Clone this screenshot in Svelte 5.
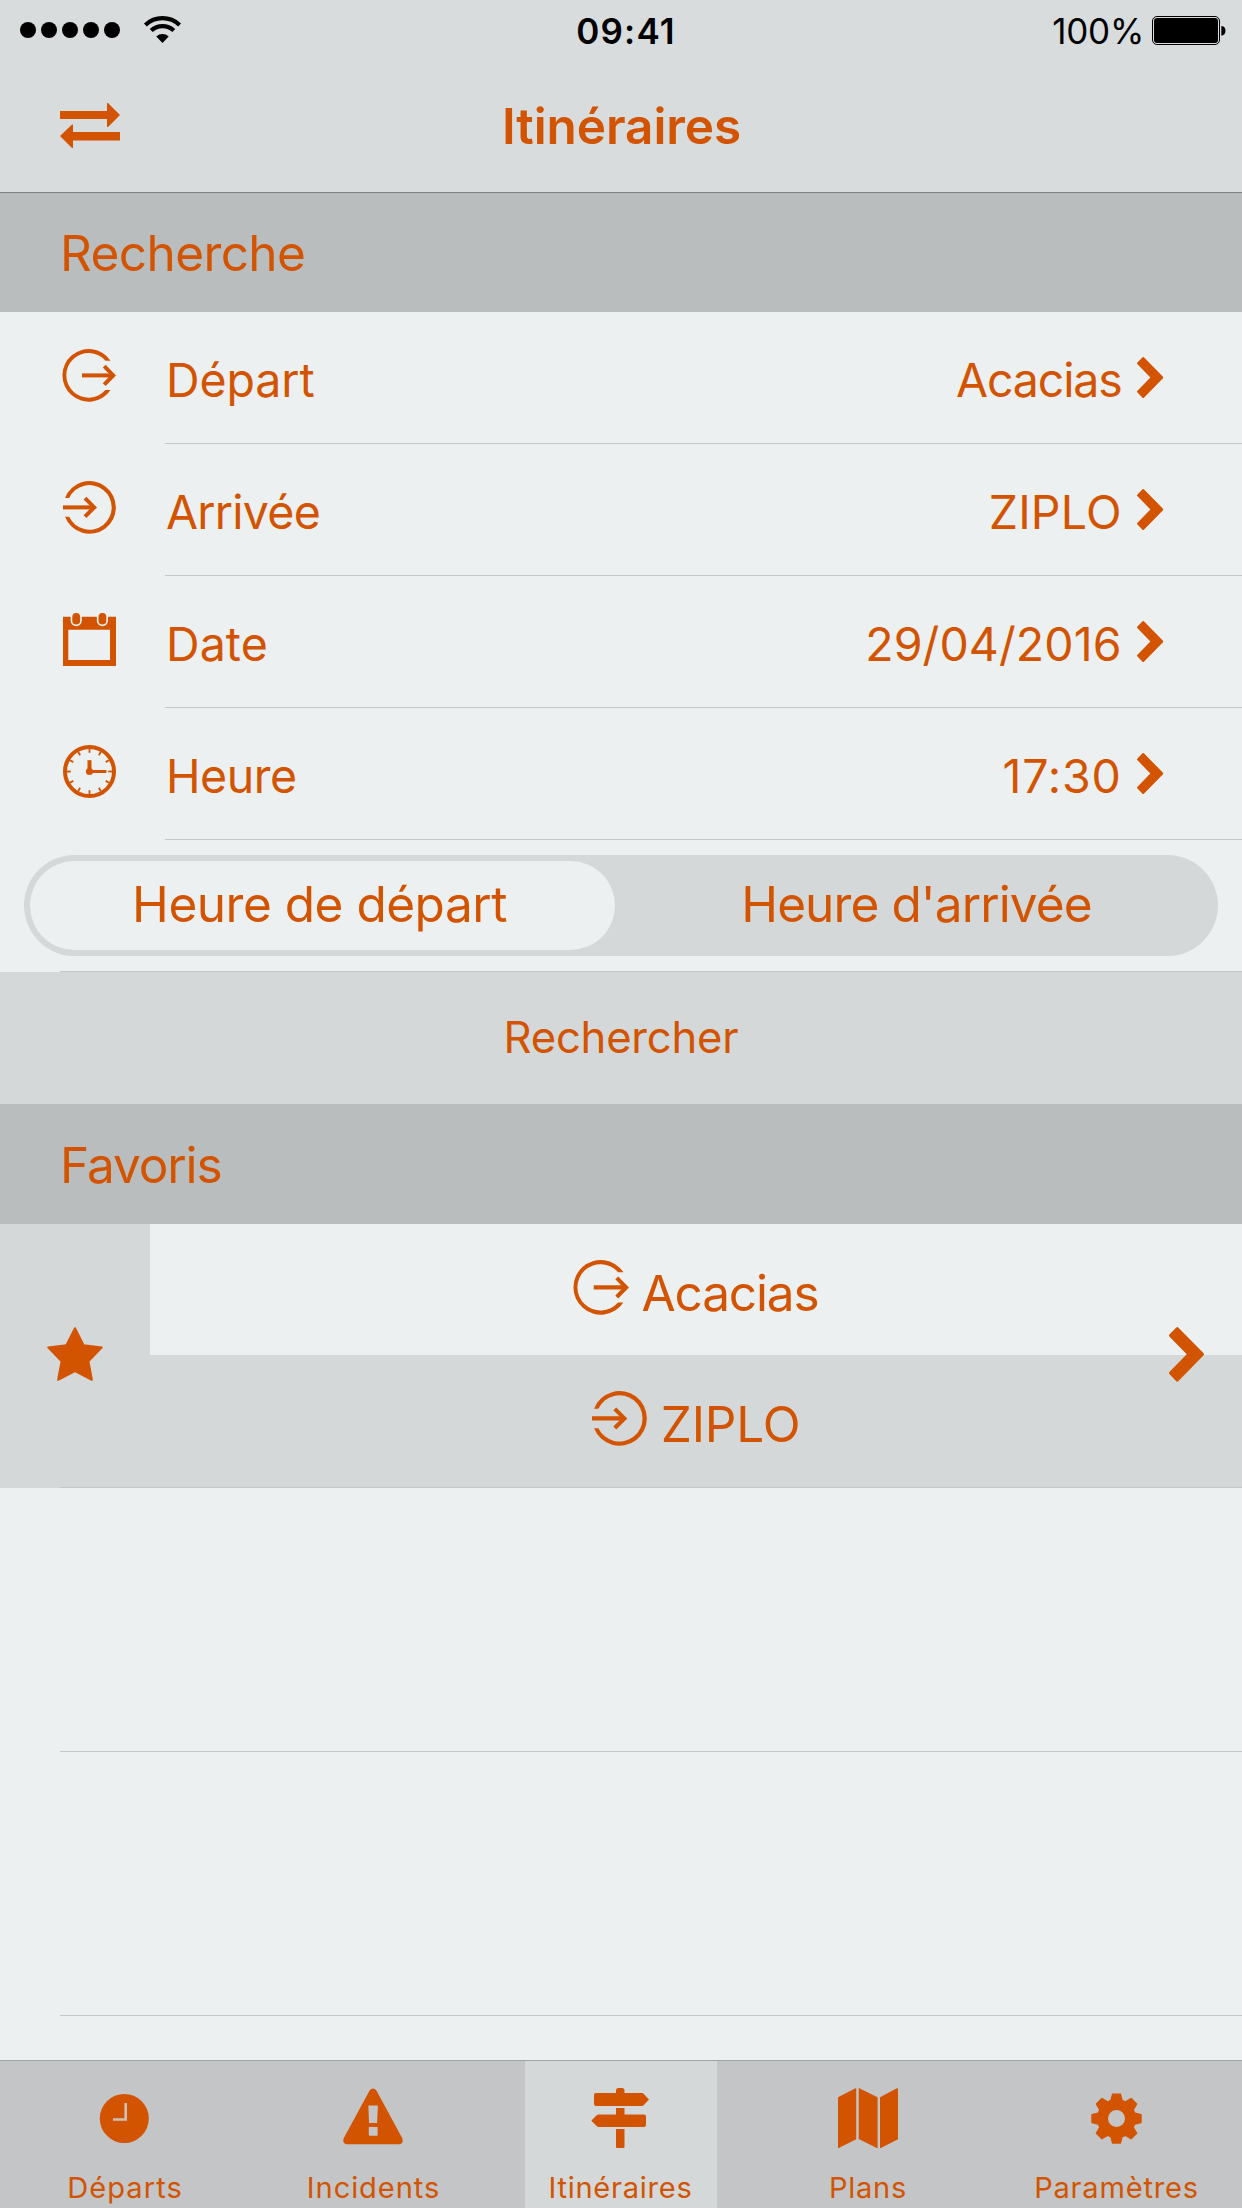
<script>
  // track: letter-spacing of the string, in px
  const rows = [
    { icon: 'out', label: 'Départ', labelTrack: -0.1, value: 'Acacias', valueTrack: -1.15 },
    { icon: 'in', label: 'Arrivée', labelTrack: -0.75, value: 'ZIPLO', valueTrack: 0.2 },
    { icon: 'calendar', label: 'Date', labelTrack: 0.1, value: '29/04/2016', valueTrack: 0.1 },
    { icon: 'clock', label: 'Heure', labelTrack: -0.5, value: '17:30', valueTrack: 0.8 }
  ];

  const tabs = [
    { icon: 'time', label: 'Départs', track: 1.05 },
    { icon: 'warning', label: 'Incidents', track: 0.9 },
    { icon: 'signs', label: 'Itinéraires', track: 0.73 },
    { icon: 'map', label: 'Plans', track: 0.71 },
    { icon: 'gear', label: 'Paramètres', track: 0.77 }
  ];

  const ticks = Array.from({ length: 12 }, (_, i) => i * 30);
  const teeth = Array.from({ length: 8 }, (_, i) => i * 45);
  const dots = [0, 1, 2, 3, 4];
  let mode = $state('depart');
  let current = $state('Itinéraires');
</script>

{#snippet outIcon()}
  <svg class="line" viewBox="0 0 53 53">
    <path d="M47.6 11.7H42.4A22.3 22.3 0 1 0 42.4 41H47.6A26.3 26.3 0 1 1 47.6 11.7Z" class="solid" />
    <path d="M19 26.4H50" />
    <path d="M41.2 17.2L50.2 26.4L41.2 35.6" />
  </svg>
{/snippet}

{#snippet inIcon()}
  <svg class="line" viewBox="0 0 53 53">
    <path d="M2 17A26.3 26.3 0 1 1 2 35.8H6.2A22.3 22.3 0 1 0 6.2 17Z" class="solid" />
    <path d="M0 26.4H31" />
    <path d="M22 17.2L31.2 26.4L22 35.6" />
  </svg>
{/snippet}

{#snippet chevron()}
  <svg viewBox="0 0 26.3 41">
    <path class="round" d="M6.2 1L25.3 20.5L6.2 40L1 34.6L14.8 20.5L1 6.4Z" />
  </svg>
{/snippet}

<div class="screen">
  <header>
    <div class="status">
      <div class="signal">
        <div class="dots">{#each dots as d (d)}<i></i>{/each}</div>
        <svg class="wifi" viewBox="0 0 37 27">
          <path d="M18.5 27L12.3 20.4A9 9 0 0 1 24.7 20.4Z" />
          <path class="arc" d="M7.2 14.6A16.4 16.4 0 0 1 29.8 14.6" />
          <path class="arc" d="M1.4 9A24.9 24.9 0 0 1 35.6 9" />
        </svg>
      </div>
      <strong>09:41</strong>
      <div class="power">
        <span>100%</span>
        <svg viewBox="0 0 74 29">
          <rect class="shell" x="0.5" y="0.5" width="67" height="28" rx="4.5" />
          <rect x="2" y="2" width="64" height="25" rx="3.2" />
          <path d="M69.3 10C72.6 10.3 73.4 12.4 73.4 14.7S72.6 19.3 69.3 19.6Z" />
        </svg>
      </div>
    </div>
    <nav class="title">
      <svg viewBox="0 0 60 45">
        <path d="M0 8H47V0H48L60 12L48 24H47V16H0Z" />
        <path d="M60 29H13V21.5H12L0 33L12 45H13V37.5H60Z" />
      </svg>
      <h1>Itinéraires</h1>
    </nav>
  </header>

  <h2 class="search-head">Recherche</h2>

  {#each rows as row (row.label)}
    <div class="row">
      <div class="row-icon">
        {#if row.icon === 'out'}
          {@render outIcon()}
        {:else if row.icon === 'in'}
          {@render inIcon()}
        {:else if row.icon === 'calendar'}
          <svg viewBox="0 0 53 53">
            <path fill-rule="evenodd" d="M0 3.7H53V53H0ZM5.3 16.8V47H47V16.8Z" />
            <rect class="halo" x="7.6" y="-2" width="11.2" height="15.2" rx="5.6" />
            <rect class="halo" x="33.8" y="-2" width="11.2" height="15.2" rx="5.6" />
            <rect x="9.3" y="0" width="7.8" height="11.6" rx="3.8" />
            <rect x="35.5" y="0" width="7.8" height="11.6" rx="3.8" />
          </svg>
        {:else}
          <svg class="line" viewBox="0 0 53 53">
            <circle cx="26.5" cy="26.5" r="24.5" />
            {#each ticks as a (a)}
              <path class="tick" d="M26.5 4V7.8" transform="rotate({a} 26.5 26.5)" />
            {/each}
            <path d="M26.5 26.5V15.2" />
            <path class="hand" d="M26.5 26.5H43.4" />
            <circle class="solid" cx="26.5" cy="26.5" r="3.6" />
          </svg>
        {/if}
      </div>
      <div class="row-body">
        <span class="label" style:letter-spacing="{row.labelTrack}px">{row.label}</span>
        <span class="value" style:letter-spacing="{row.valueTrack}px">{row.value}</span>
        <div class="go">{@render chevron()}</div>
      </div>
    </div>
  {/each}

  <div class="switch-row">
    <div class="switch">
      <button class="depart" class:on={mode === 'depart'} onclick={() => (mode = 'depart')}>Heure de départ</button>
      <button class="arrive" class:on={mode === 'arrive'} onclick={() => (mode = 'arrive')}>Heure d'arrivée</button>
    </div>
  </div>

  <button class="submit">Rechercher</button>

  <h2 class="fav-head">Favoris</h2>

  <div class="favorite">
    <div class="star">
      <svg viewBox="0 0 56 54">
        <path class="round" d="M28 1.2L36.6 18.2L54.8 20.4L41.4 34.2L44.9 52.8L28 44.2L11.1 52.8L14.6 34.2L1.2 20.4L19.4 18.2Z" />
      </svg>
    </div>
    <div class="trip">
      <div class="from">{@render outIcon()}<span>Acacias</span></div>
      <div class="to">{@render inIcon()}<span>ZIPLO</span></div>
    </div>
    <div class="fav-go">{@render chevron()}</div>
  </div>

  <div class="empty"></div>
  <div class="empty"></div>
  <div class="rest"></div>

  <footer>
    {#each tabs as tab (tab.label)}
      <div class="tab">
        <button class:active={current === tab.label} onclick={() => (current = tab.label)}>
          <svg viewBox="0 0 60 60">
            {#if tab.icon === 'time'}
              <circle cx="29.3" cy="30.5" r="24.5" />
              <path class="cut" d="M30.7 15V31.5H18" />
            {:else if tab.icon === 'warning'}
              <path fill-rule="evenodd" d="M26.6 2.6Q30 -1.4 33.4 2.6L59.3 50.2Q61 55.6 56 56.2H4Q-1 55.6 0.7 50.2ZM26 17.5Q25.4 17.5 25.4 18.3L26 34.4Q26 35 26.6 35H33.5Q34.1 35 34.1 34.4L34.9 18.3Q34.9 17.5 34.2 17.5ZM26.5 39Q25.8 39 25.8 39.8V47Q25.8 47.8 26.5 47.8H33.9Q34.6 47.8 34.6 47V39.8Q34.6 39 33.9 39Z" />
            {:else if tab.icon === 'signs'}
              <path d="M25 5V2.5Q25 0 27.5 0H31Q33.5 0 33.5 2.5V5H51Q52 5 52.6 5.8L58 11.5L52.6 17.2Q52 18 51 18H5Q3 18 3 16V7Q3 5 5 5Z" />
              <path d="M25 20H33.5V26.5H53Q55 26.5 55 28.5V37Q55 39 53 39H7.5Q6.5 39 5.9 38.3L0.3 32.7L5.9 27.1Q6.5 26.5 7.5 26.5H25Z" />
              <path d="M25 41H33.5V58.8Q33.5 60 32.3 60H26.2Q25 60 25 58.8Z" />
            {:else if tab.icon === 'map'}
              <path d="M0 9.2L17.6 0.3Q18.2 0 18.2 0.8V51.2L0.8 60H0ZM20.7 0L39.6 9.2V60H38.8L21.3 51.2H20.7ZM42 9.2L58.9 0.3Q60 0 60 0.8V51.2L42.8 60H42Z" />
            {:else}
              <circle class="ring" cx="29.5" cy="30.6" r="14" />
              {#each teeth as a (a)}
                <path d="M22.6 15L24.9 6Q25 5.4 25.6 5.4H33.4Q34 5.4 34.1 6L36.4 15Z" transform="rotate({a} 29.5 30.6)" />
              {/each}
            {/if}
          </svg>
          <span style:letter-spacing="{tab.track}px">{tab.label}</span>
        </button>
      </div>
    {/each}
  </footer>
</div>

<style>
  :global(body) {
    margin: 0;
  }
  .screen {
    display: flex;
    flex-direction: column;
    box-sizing: border-box;
    width: 1242px;
    height: 2208px;
    overflow: hidden;
    background: #ecf0f1;
    color: #d35400;
    font-family: Inter, 'Liberation Sans', sans-serif;
    font-size: 49.5px;
  }
  .screen > * {
    flex: none;
  }
  svg {
    display: block;
    overflow: visible;
    fill: #d35400;
  }
  button {
    margin: 0;
    padding: 0;
    border: 0;
    background: none;
    color: inherit;
    font: inherit;
  }
  .line {
    fill: none;
    stroke: #d35400;
    stroke-width: 4;
  }
  .solid {
    fill: #d35400;
    stroke: none;
  }
  .tick {
    stroke-width: 1.8;
  }
  .hand {
    stroke-width: 3;
  }
  .halo {
    fill: #ecf0f1;
  }
  .round {
    stroke: #d35400;
    stroke-width: 2;
    stroke-linejoin: round;
  }

  header {
    box-sizing: border-box;
    height: 193px;
    border-bottom: 1px solid #7f8283;
    background: #d8dcdd;
  }
  .status,
  .title {
    display: grid;
    grid-template-columns: 1fr auto 1fr;
    align-items: center;
  }
  .status {
    height: 60px;
    padding: 0 16px 0 20px;
    color: #000;
    font-size: 35px;
  }
  .status svg {
    fill: #000;
  }
  .status strong {
    padding: 2px 0 0 6px;
    font-weight: 600;
    letter-spacing: 1.2px;
  }
  .signal,
  .dots {
    display: flex;
    align-items: center;
  }
  .dots {
    gap: 5px;
  }
  .dots i {
    width: 16px;
    height: 16px;
    border-radius: 50%;
    background: #000;
  }
  .wifi {
    width: 37px;
    height: 27px;
    margin: 0 0 1px 24px;
  }
  .wifi .arc {
    fill: none;
    stroke: #000;
    stroke-width: 4.2;
  }
  .power {
    display: flex;
    align-items: center;
    justify-content: flex-end;
    gap: 8px;
  }
  .power span {
    padding-top: 2px;
    letter-spacing: -0.27px;
  }
  .power svg {
    width: 74px;
    height: 29px;
  }
  .power .shell {
    fill: none;
    stroke: #000;
    stroke-width: 1;
  }
  .title {
    height: 132px;
    padding: 0 60px;
  }
  .title svg {
    width: 60px;
    height: 45px;
    margin-bottom: 2px;
  }
  h1 {
    margin: 0;
    padding-left: 1px;
    font-size: 49.5px;
    font-weight: 600;
    letter-spacing: -0.08px;
  }

  h2 {
    display: flex;
    align-items: center;
    box-sizing: border-box;
    padding-left: 60px;
    background: #b9bdbe;
    font-size: 49.5px;
    font-weight: 400;
  }
  .search-head {
    height: 119px;
    margin: 0;
    letter-spacing: -0.59px;
  }
  .fav-head {
    height: 120px;
    margin: 0;
    padding-top: 2px;
    letter-spacing: -1.09px;
  }

  .row {
    display: flex;
    height: 132px;
    font-size: 46.5px;
  }
  .row-icon {
    display: flex;
    align-items: center;
    width: 102px;
    padding: 0 0 5px 63px;
  }
  .row-icon svg {
    width: 53px;
    height: 53px;
  }
  .row-body {
    display: flex;
    flex: 1;
    align-items: center;
    padding-right: 79px;
    border-bottom: 1px solid #c8c7cc;
  }
  .label,
  .value {
    padding-top: 5px;
  }
  .label {
    padding-left: 1px;
  }
  .value {
    margin-left: auto;
  }
  .go {
    width: 26.3px;
    margin-left: 15px;
  }

  .switch-row {
    position: relative;
    display: flex;
    box-sizing: border-box;
    height: 132px;
    padding: 15px 24px 16px;
  }
  .switch-row::after,
  .favorite::after {
    content: '';
    position: absolute;
    right: 0;
    bottom: 0;
    left: 60px;
    height: 1px;
    background: #c3c7c8;
  }
  .switch {
    display: grid;
    flex: 1;
    grid-template-columns: 585px 1fr;
    box-sizing: border-box;
    padding: 6px;
    border-radius: 51px;
    background: #d4d8d9;
  }
  .switch button {
    padding: 0 6px 3px 0;
    border-radius: 45px;
  }
  .switch .on {
    background: #ecf0f1;
  }
  .switch .depart {
    letter-spacing: -0.48px;
  }
  .switch .arrive {
    padding: 0 0 3px 6px;
    letter-spacing: -0.89px;
  }

  .submit {
    height: 132px;
    padding: 0 0 2px;
    background: #d4d8d9;
    font-size: 43.6px;
    letter-spacing: -0.22px;
  }

  .favorite {
    position: relative;
    display: flex;
    height: 264px;
    background: #d4d8d9;
  }
  .star {
    display: flex;
    align-items: center;
    justify-content: center;
    width: 150px;
    padding-bottom: 4px;
    box-sizing: border-box;
  }
  .star svg {
    width: 56px;
    height: 54px;
  }
  .trip {
    display: grid;
    flex: 1;
    grid-template-rows: 131px 133px;
  }
  .trip > div {
    display: flex;
    align-items: center;
    justify-content: center;
  }
  .trip svg {
    width: 55px;
    height: 55px;
    margin-bottom: 4px;
  }
  .from {
    gap: 13px;
    background: #ecf0f1;
    letter-spacing: -1.13px;
  }
  .from span {
    padding-top: 7px;
  }
  .to {
    gap: 14px;
    letter-spacing: -0.16px;
  }
  .trip .to svg {
    margin-bottom: 6px;
  }
  .to span {
    padding-top: 5px;
  }
  .fav-go {
    position: absolute;
    top: 103px;
    right: 38px;
    width: 35px;
  }

  .empty {
    height: 263px;
    margin-left: 60px;
    border-bottom: 1px solid #c3c7c8;
  }
  .screen > .rest {
    flex: 1;
  }

  footer {
    display: grid;
    grid-template-columns: 249px 248px 248px 248px 249px;
    box-sizing: border-box;
    height: 148px;
    border-top: 1px solid #a2a5a6;
    background: #c4c5c7;
    font-size: 29.1px;
    line-height: 36px;
  }
  .tab {
    display: flex;
    justify-content: center;
  }
  .tab button {
    display: flex;
    flex-direction: column;
    align-items: center;
    gap: 22px;
    width: 192px;
    padding-top: 27px;
  }
  .tab:nth-child(n + 4) button {
    padding-right: 2px;
  }
  .tab:nth-child(-n + 2) span {
    padding-left: 1px;
  }
  .tab .active {
    background: #d4d8d9;
  }
  .tab .active span {
    padding-right: 1px;
  }
  .tab svg {
    width: 60px;
    height: 60px;
  }
  .cut {
    fill: none;
    stroke: #cdc2b9;
    stroke-width: 2.6;
  }
  .ring {
    fill: none;
    stroke: #d35400;
    stroke-width: 11;
  }
</style>
